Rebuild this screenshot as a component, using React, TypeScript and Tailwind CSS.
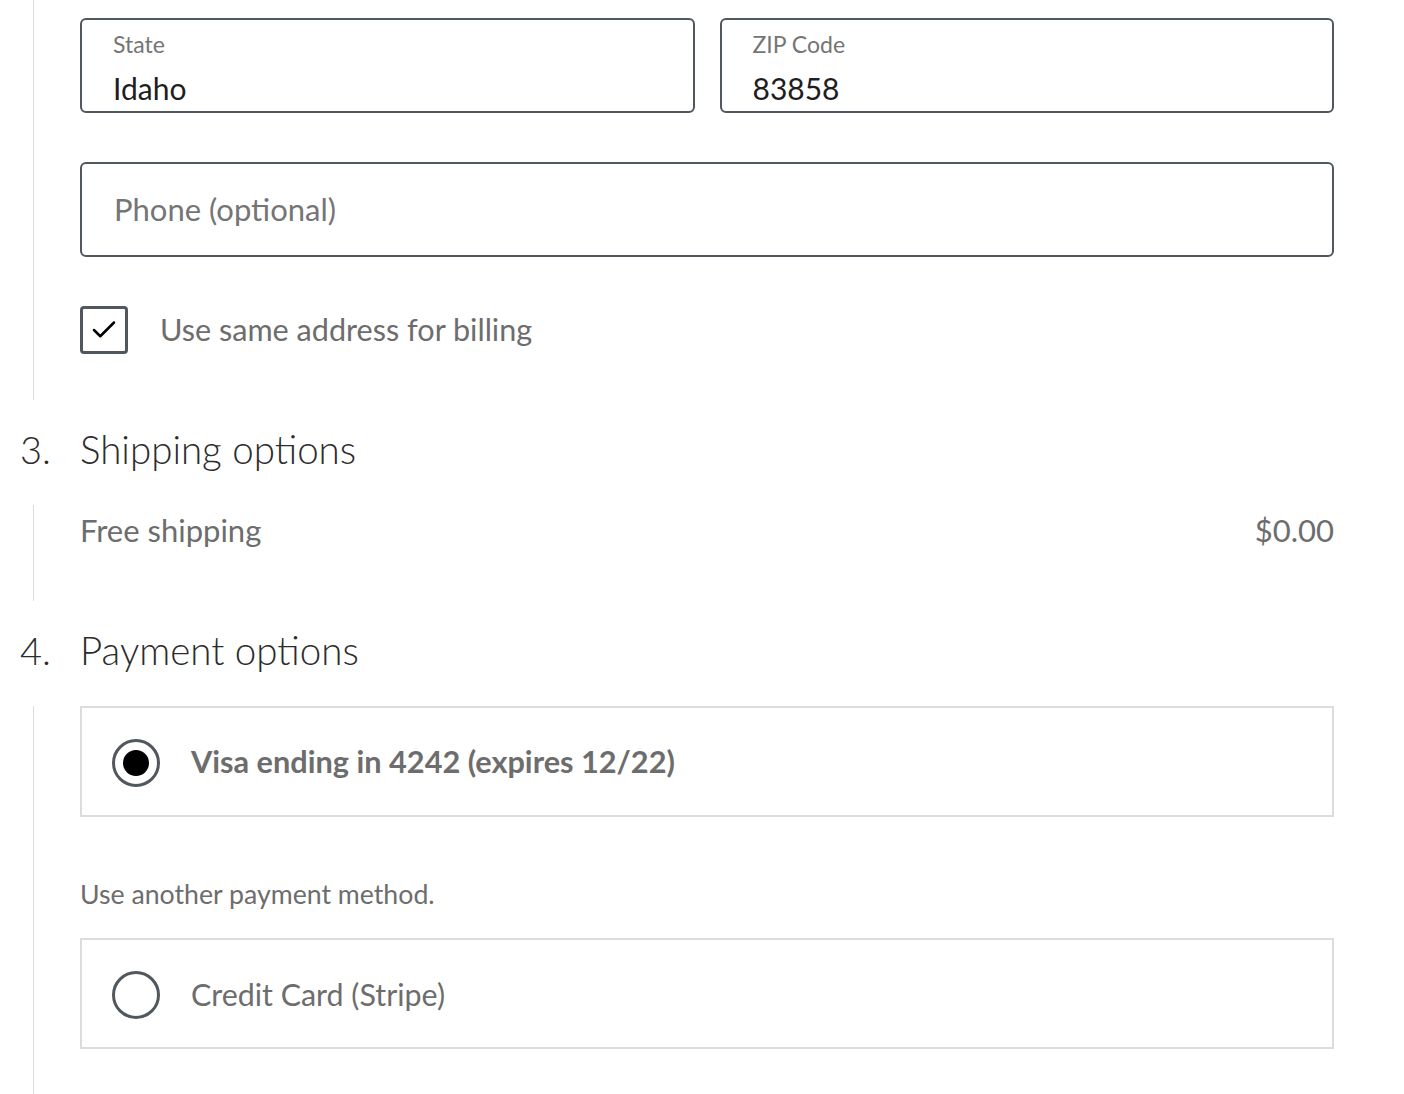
import { Check } from "lucide-react";

const font = { fontFamily: "Lato, 'Noto Sans', sans-serif" };

function FloatingField({ label, value }: { label: string; value: string }) {
  return (
    <div className="flex h-[95px] flex-col rounded-[6px] border-2 border-[#50575e] pl-[31px] pt-[11px]">
      <span className="text-[23px] leading-[26px] text-[#757575]">{label}</span>
      <span className="mt-[13px] text-[30px] leading-[36px] text-[#1e1e1e]">{value}</span>
    </div>
  );
}

function StepHeading({ num, title }: { num: string; title: string }) {
  return (
    <div className="flex h-[105px] items-center pb-[6px]">
      <span className="w-[80px] pl-[20px] text-[38px] font-light text-[#2c2c2c]">{num}</span>
      <span className="text-[38.5px] font-light text-[#2c2c2c]">{title}</span>
    </div>
  );
}

function RadioCard({ label, checked, bold }: { label: string; checked?: boolean; bold?: boolean }) {
  return (
    <div className="flex h-[111px] items-center border-2 border-[#dcdcde] pl-[30px] pt-[2px]">
      <span className="flex h-[48px] w-[48px] items-center justify-center rounded-full border-[3px] border-[#50575e]">
        {checked && <span className="h-[26px] w-[26px] rounded-full bg-black" />}
      </span>
      <span className={`ml-[31px] text-[#6d6d6d] ${bold ? "text-[30.7px] font-bold" : "text-[30.4px]"}`}>{label}</span>
    </div>
  );
}

export default function App() {
  return (
    <div className="h-[1094px] w-[1404px] overflow-hidden bg-white" style={font}>
      {/* step 2 tail: address */}
      <div className="ml-[33px] mr-[70px] border-l-[1.5px] border-[#dcdcde] pl-[46px] pt-[18px] pb-[46px]">
        <div className="grid grid-cols-2 gap-[25px]">
          <FloatingField label="State" value="Idaho" />
          <FloatingField label="ZIP Code" value="83858" />
        </div>
        <div className="mt-[49px] flex h-[95px] items-center rounded-[6px] border-2 border-[#50575e] pl-[32px]">
          <span className="text-[31px] text-[#757575]">Phone (optional)</span>
        </div>
        <label className="mt-[49px] flex items-center">
          <span className="flex h-[48px] w-[48px] items-center justify-center rounded-[4px] border-[3px] border-[#50575e]">
            <Check className="h-[30px] w-[30px] text-black" strokeWidth={2} />
          </span>
          <span className="ml-[32px] text-[30.6px] text-[#6d6d6d]">Use same address for billing</span>
        </label>
      </div>

      <StepHeading num="3." title="Shipping options" />
      <div className="ml-[33px] mr-[70px] border-l-[1.5px] border-[#dcdcde] pl-[46px] pb-[46px]">
        <div className="flex h-[50px] items-center justify-between text-[31px] text-[#6d6d6d]">
          <span>Free shipping</span>
          <span>$0.00</span>
        </div>
      </div>

      <StepHeading num="4." title="Payment options" />
      <div className="ml-[33px] mr-[70px] border-l-[1.5px] border-[#dcdcde] pl-[46px] pb-[80px]">
        <RadioCard label="Visa ending in 4242 (expires 12/22)" checked bold />
        <p className="mt-[59px] text-[26.7px] leading-[36px] text-[#6d6d6d]">Use another payment method.</p>
        <div className="mt-[26px]">
          <RadioCard label="Credit Card (Stripe)" />
        </div>
      </div>
    </div>
  );
}
